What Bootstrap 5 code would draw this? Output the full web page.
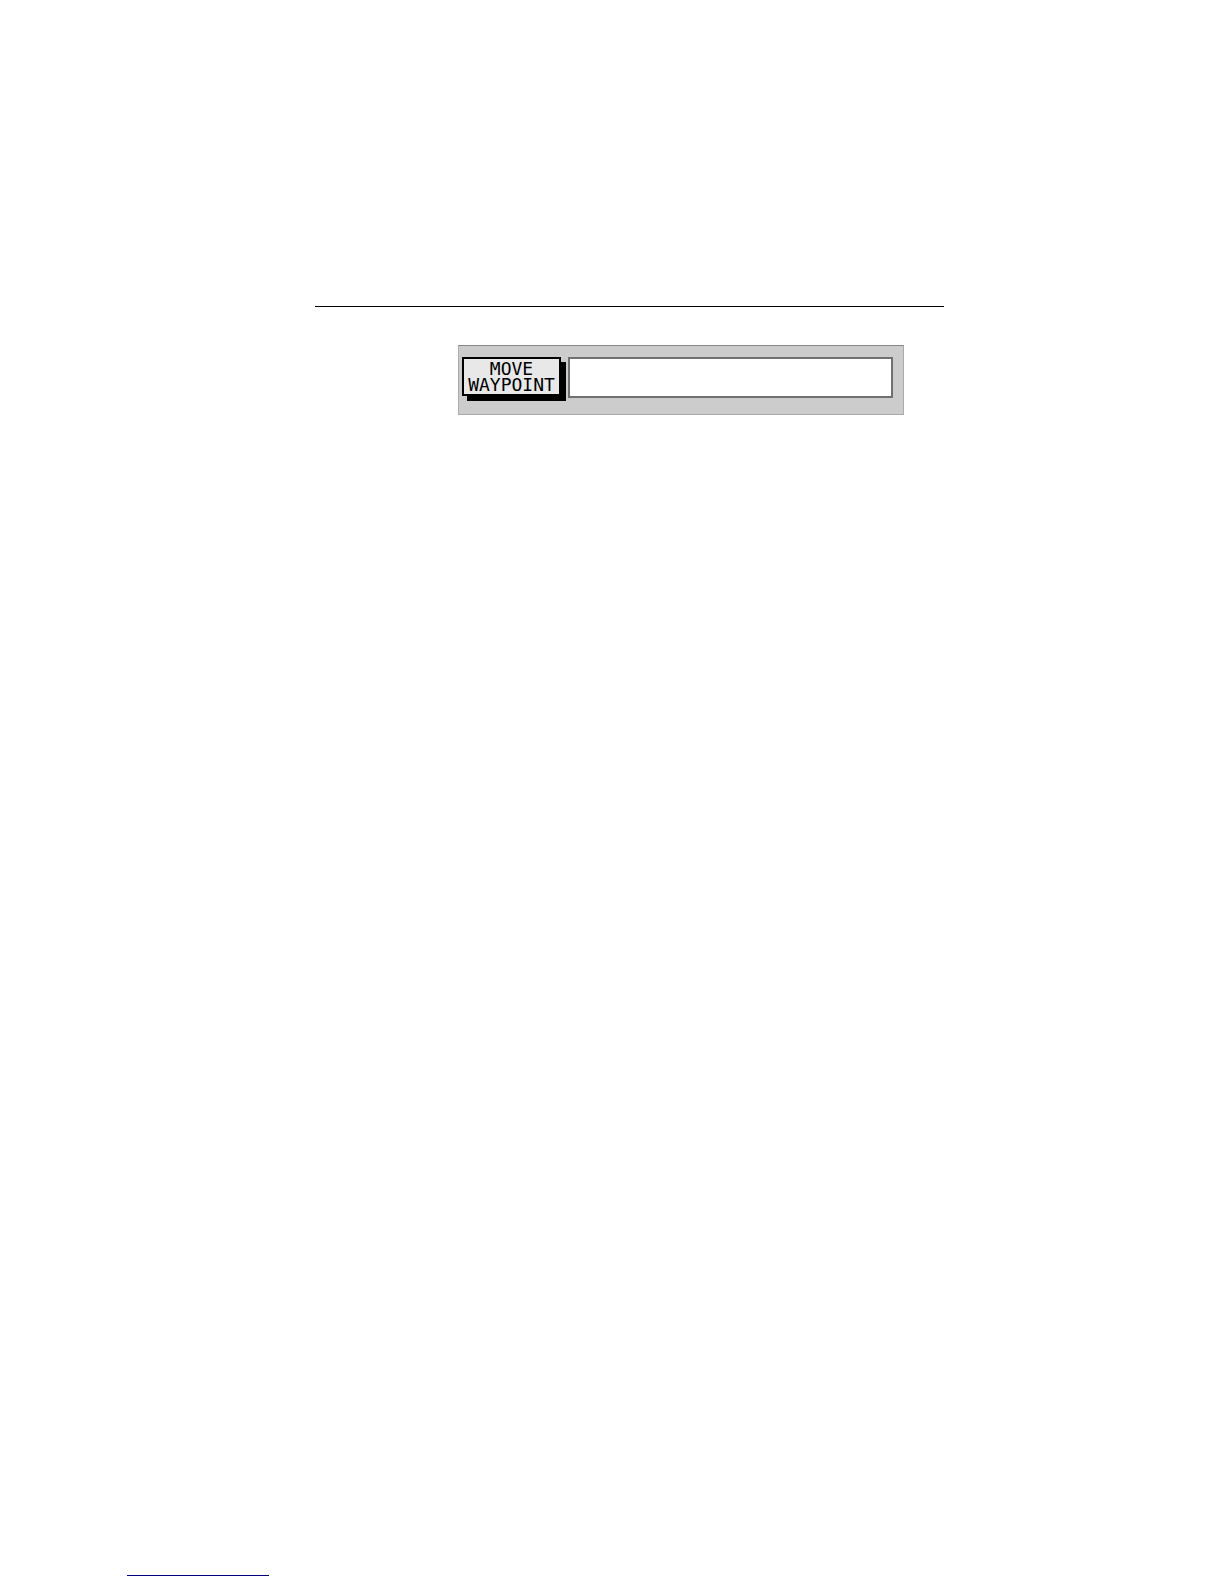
<!DOCTYPE html>
<html lang="en">
<head>
<meta charset="utf-8">
<meta name="viewport" content="width=device-width, initial-scale=1">
<title>Move waypoint</title>
<link rel="stylesheet" href="https://cdn.jsdelivr.net/npm/bootstrap@5.3.0/dist/css/bootstrap.min.css">
<style>
  body { background: #fff; color: #000; }
  .sheet { padding: 306px 280px 0 315px; }
  .rule { border-top: 1px solid #000; opacity: 1; }
  .softkeys {
    margin: 38px 40px 0 143px;
    padding: 11px 10px 16px 3px;
    gap: 7px;
    background: #ccc;
    border: 1px solid #aaa;
    border-top-color: #888;
  }
  .softkey {
    width: 99px;
    height: 39px;
    border: 2px solid #000;
    background: #e8e8e8;
    color: #000;
    box-shadow: 5px 5px 0 #000;
    font: 18px/16px "DejaVu Sans Mono", monospace;
  }
  .readout { min-width: 0; height: 41px; border: 2px solid #707070; background: #fff; }
  .foot-rule { width: 142px; margin: 0 0 8px 127px; border-top: 1px solid #000080; opacity: 1; }
</style>
</head>
<body>
<div class="d-flex flex-column min-vh-100">
  <main class="sheet flex-grow-1">
    <hr class="rule m-0">
    <div class="softkeys d-flex align-items-start">
      <button type="button" class="softkey flex-shrink-0 p-0 text-center">MOVE<br>WAYPOINT</button>
      <input type="text" class="readout flex-grow-1 px-2" aria-label="Waypoint readout">
    </div>
  </main>
  <footer>
    <hr class="foot-rule">
  </footer>
</div>
<script src="https://cdn.jsdelivr.net/npm/bootstrap@5.3.0/dist/js/bootstrap.bundle.min.js"></script>
</body>
</html>
